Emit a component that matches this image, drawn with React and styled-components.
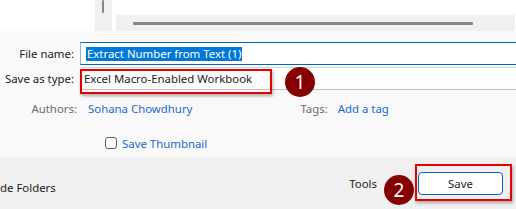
import styled, { createGlobalStyle } from 'styled-components'

const GlobalStyle = createGlobalStyle`
	html, body {
		margin: 0;
		padding: 0;
		background: #f9f9f9;
	}
	body {
		font-family: 'Noto Sans', 'Open Sans', sans-serif;
		font-size: 11.4px;
		color: #1b1b1b;
	}
`

const Dialog = styled.div`
	position: relative;
	width: 516px;
	height: 209px;
	overflow: hidden;
	display: flex;
	flex-direction: column;
	background: #f9f9f9;
`

const TopStrip = styled.div`
	display: flex;
	height: 31px;
	flex-shrink: 0;
	background: #ffffff;
`

const TreePane = styled.div`
	width: 95px;
	background: #ffffff;
`

const VScroll = styled.div`
	width: 16px;
	background: #f0f0f0;
	display: flex;
	justify-content: center;
	padding-right: 1px;

	&::before {
		content: '';
		width: 2px;
		height: 13px;
		background: #858585;
		border-radius: 1px;
	}
`

const ListPane = styled.div`
	flex: 1;
	margin-left: 4px;
	display: flex;
	flex-direction: column;
	justify-content: flex-end;
`

const HScroll = styled.div`
	height: 16px;
	background: #f0f0f0;
	margin-right: 1px;
	display: flex;
	align-items: center;
	padding-left: 17px;

	&::before {
		content: '';
		width: 340px;
		height: 3px;
		background: #858585;
		border-radius: 1px;
	}
`

const Form = styled.div`
	display: grid;
	grid-template-columns: 80px 1fr;
	grid-template-rows: 25px 23px 32px auto;
	padding-top: 11px;
	height: 126px;
	flex-shrink: 0;
	box-sizing: border-box;
	align-content: start;
`

const Label = styled.div`
	padding-right: ${(p) => p.$pad ?? 6}px;
	color: ${(p) => (p.$muted ? '#6b6b6b' : '#1b1b1b')};
	display: flex;
	align-items: center;
	justify-content: flex-end;
	height: 23px;
`

const NameInput = styled.div`
	height: 23px;
	box-sizing: border-box;
	border-top: 1px solid #0067c0;
	border-bottom: 1px solid #0067c0;
	border-left: 1px solid #8fb8e0;
	background: #ffffff;
	display: flex;
	align-items: center;
	padding-left: 5px;
`

const Selected = styled.span`
	background: #0078d7;
	color: #ffffff;
	line-height: 14px;
	padding: 0 1px;
`

const TypeField = styled.div`
	height: 23px;
	box-sizing: border-box;
	border-top: 1px solid #d6d6d6;
	border-bottom: 1px solid #c2c2c2;
	background: #fdfdfd;
	display: flex;
	align-items: center;
	padding-left: 4px;
	color: #1b1b1b;
`

const MetaRow = styled.div`
	display: flex;
	align-items: center;
	height: 32px;
	box-sizing: border-box;
	padding: 4px 0 0 8px;
`

const MetaLabel = styled(Label)`
	height: 32px;
	box-sizing: border-box;
	padding-top: 4px;
`

const Link = styled.span`
	color: #1a6ad1;
`

const TagGroup = styled.div`
	display: flex;
	align-items: center;
	margin-left: 108px;
	gap: 10px;
`

const TagLabel = styled.span`
	color: #6b6b6b;
`

const ThumbRow = styled.label`
	display: flex;
	align-items: center;
	gap: 5px;
	margin-left: 25px;
	margin-top: 13px;
	height: 16px;
`

const Checkbox = styled.span`
	width: 12px;
	height: 12px;
	box-sizing: border-box;
	border: 1px solid #5c5c5c;
	border-radius: 3px;
	background: #ffffff;
`

const Footer = styled.div`
	height: 52px;
	flex-shrink: 0;
	background: #f0f0f0;
	display: flex;
	align-items: center;
`

const FolderToggle = styled.span`
	color: #1b1b1b;
	margin-top: 8px;
`

const Tools = styled.span`
	margin-left: auto;
	color: #1b1b1b;
`

const SaveButton = styled.button`
	margin-left: 41px;
	margin-right: 13px;
	margin-top: 1px;
	width: 85px;
	height: 23px;
	box-sizing: border-box;
	border: 1px solid #0067c0;
	border-radius: 4px;
	background: #ffffff;
	font: inherit;
	color: #1b1b1b;
	padding: 0;
`

const Highlight = styled.div`
	position: absolute;
	left: ${(p) => p.$x}px;
	top: ${(p) => p.$y}px;
	width: ${(p) => p.$w}px;
	height: ${(p) => p.$h}px;
	box-sizing: border-box;
	border: 2px solid #e60000;
	box-shadow: 1px 2px 3px rgba(0, 0, 0, 0.3);
	pointer-events: none;
`

const Badge = styled.div`
	position: absolute;
	left: ${(p) => p.$x}px;
	top: ${(p) => p.$y}px;
	width: 30px;
	height: 30px;
	border-radius: 50%;
	background: #850000;
	color: #ffffff;
	font-size: 19px;
	display: flex;
	align-items: center;
	justify-content: center;
	line-height: 1;
`

export default function App() {
	return (
		<>
			<GlobalStyle />
			<Dialog>
				<TopStrip>
					<TreePane />
					<VScroll />
					<ListPane>
						<HScroll />
					</ListPane>
				</TopStrip>

				<Form>
					<Label>File name:</Label>
					<NameInput>
						<Selected>Extract Number from Text (1)</Selected>
					</NameInput>

					<Label>Save as type:</Label>
					<TypeField>Excel Macro-Enabled Workbook</TypeField>

					<MetaLabel $muted $pad={3}>
						Authors:
					</MetaLabel>
					<MetaRow>
						<Link>Sohana Chowdhury</Link>
						<TagGroup>
							<TagLabel>Tags:</TagLabel>
							<Link>Add a tag</Link>
						</TagGroup>
					</MetaRow>

					<span />
					<ThumbRow>
						<Checkbox />
						<Link>Save Thumbnail</Link>
					</ThumbRow>
				</Form>

				<Footer>
					<FolderToggle>de Folders</FolderToggle>
					<Tools>Tools</Tools>
					<SaveButton>Save</SaveButton>
				</Footer>

				<Highlight $x={80} $y={69} $w={192} $h={25} />
				<Badge $x={285} $y={67}>1</Badge>
				<Highlight $x={415} $y={164} $w={97} $h={37} />
				<Badge $x={384} $y={175}>2</Badge>
			</Dialog>
		</>
	)
}
